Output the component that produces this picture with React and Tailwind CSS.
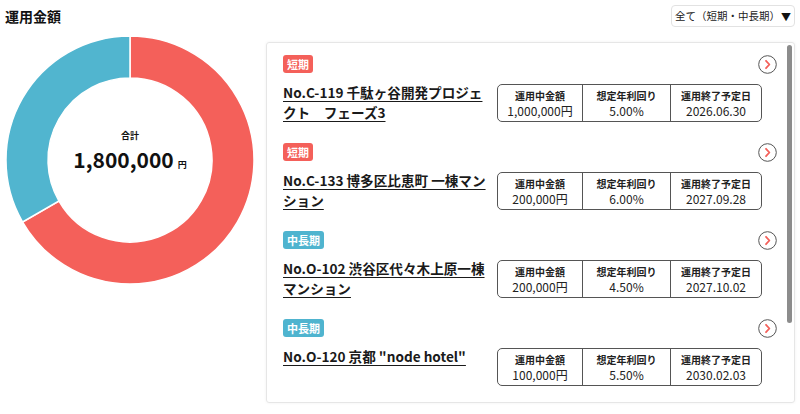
import React from "react";

const items = [
  { term: "短期", title: ["No.C-119 千駄ヶ谷開発プロジェ", "クト　フェーズ3"], amount: "1,000,000円", rate: "5.00%", end: "2026.06.30" },
  { term: "短期", title: ["No.C-133 博多区比恵町 一棟マン", "ション"], amount: "200,000円", rate: "6.00%", end: "2027.09.28" },
  { term: "中長期", title: ["No.O-102 渋谷区代々木上原一棟", "マンション"], amount: "200,000円", rate: "4.50%", end: "2027.10.02" },
  { term: "中長期", title: ['No.O-120 京都 "node hotel"'], amount: "100,000円", rate: "5.50%", end: "2030.02.03" },
];

function arc(cx, cy, R, r, a0, a1) {
  const p = (rad, a) => {
    const t = ((a - 90) * Math.PI) / 180;
    return `${(cx + rad * Math.cos(t)).toFixed(2)} ${(cy + rad * Math.sin(t)).toFixed(2)}`;
  };
  const large = a1 - a0 > 180 ? 1 : 0;
  return `M ${p(R, a0)} A ${R} ${R} 0 ${large} 1 ${p(R, a1)} L ${p(r, a1)} A ${r} ${r} 0 ${large} 0 ${p(r, a0)} Z`;
}

function Donut() {
  return (
    <div className="relative w-[266px] h-[250px] shrink-0">
      <svg width="266" height="250" viewBox="0 0 266 250">
        <path d={arc(130, 125, 124, 82, 0, 240)} fill="#f4605a" stroke="#fff" strokeWidth="1.5" />
        <path d={arc(130, 125, 124, 82, 240, 360)} fill="#51b5cf" stroke="#fff" strokeWidth="1.5" />
      </svg>
      <div className="absolute left-[30px] top-[95px] w-[200px] flex flex-col items-center text-[#111]">
        <span className="text-[9px] font-bold leading-[12px]">合計</span>
        <div className="flex items-baseline mt-[3px]">
          <span className="text-[21px] font-bold leading-[28px]">1,800,000</span>
          <span className="text-[9px] font-bold ml-[4px]">円</span>
        </div>
      </div>
    </div>
  );
}

function Arrow() {
  return (
    <svg width="19" height="19" viewBox="0 0 19 19">
      <circle cx="9.5" cy="9.5" r="8.8" fill="#fff" stroke="#555" strokeWidth="1" />
      <path d="M8 5.8 L11.4 9.5 L8 13.2" fill="none" stroke="#f4605a" strokeWidth="1.8" strokeLinecap="round" strokeLinejoin="round" />
    </svg>
  );
}

function Item({ term, title, amount, rate, end }) {
  const short = term === "短期";
  return (
    <div className="pb-[21px]">
      <div className="flex items-center justify-between h-[18px] pr-[17px]">
        <span
          className={`px-[4px] h-[18px] leading-[18px] rounded-[3px] text-white text-[11px] font-bold ${
            short ? "bg-[#f4605a]" : "bg-[#4fb4cf]"
          }`}
        >
          {term}
        </span>
        <Arrow />
      </div>
      <div className="flex mt-[9px]">
        <p className="w-[208px] whitespace-nowrap text-[13.6px] font-bold leading-[20px] underline underline-offset-[3px] text-[#1a1a1a]">
          {title.map((line, i) => (
            <React.Fragment key={i}>
              {i > 0 && <br />}
              {line}
            </React.Fragment>
          ))}
        </p>
        <div className="ml-[6px] mt-[2px] grid grid-cols-[84px_88px_91px] h-[38px] border border-[#555] rounded-[5px] text-[#222]">
          {[
            ["運用中金額", amount],
            ["想定年利回り", rate],
            ["運用終了予定日", end],
          ].map(([h, v], i) => (
            <div key={h} className={`flex flex-col items-center pt-[4px] ${i > 0 ? "border-l border-[#555]" : ""}`}>
              <span className="text-[10px] font-bold leading-[14px]">{h}</span>
              <span className="text-[12px] leading-[16px]">{v}</span>
            </div>
          ))}
        </div>
      </div>
    </div>
  );
}

export default function App() {
  return (
    <div className="w-[800px] h-[414px] bg-white overflow-hidden font-['Noto_Sans_CJK_JP','Noto_Sans',sans-serif] text-[#111]">
      <div className="flex items-center justify-between pl-[5px] pr-[5px] pt-[5px]">
        <h1 className="text-[14px] font-bold leading-[22px]">運用金額</h1>
        <div className="h-[22px] w-[124px] flex items-center justify-center border border-[#e2e2e2] rounded-[4px] text-[10.5px] text-[#222]">
          <span>全て（短期・中長期）</span>
          <span className="text-[10px] ml-[1px] text-[#111]">▼</span>
        </div>
      </div>
      <div className="flex mt-[8px]">
        <Donut />
        <div className="relative mt-[7px] w-[529px] h-[361px] border border-[#e6e6e6] rounded-[3px] shadow-[0_0_3px_rgba(0,0,0,0.06)] overflow-hidden">
          <div className="h-full pl-[16px] pt-[12px]">
            {items.map((it) => (
              <Item key={it.title[0]} {...it} />
            ))}
          </div>
          <div className="absolute right-[2px] top-[2px] w-[5px] h-[278px] rounded-full bg-[#8c8c8c]" />
        </div>
      </div>
    </div>
  );
}
